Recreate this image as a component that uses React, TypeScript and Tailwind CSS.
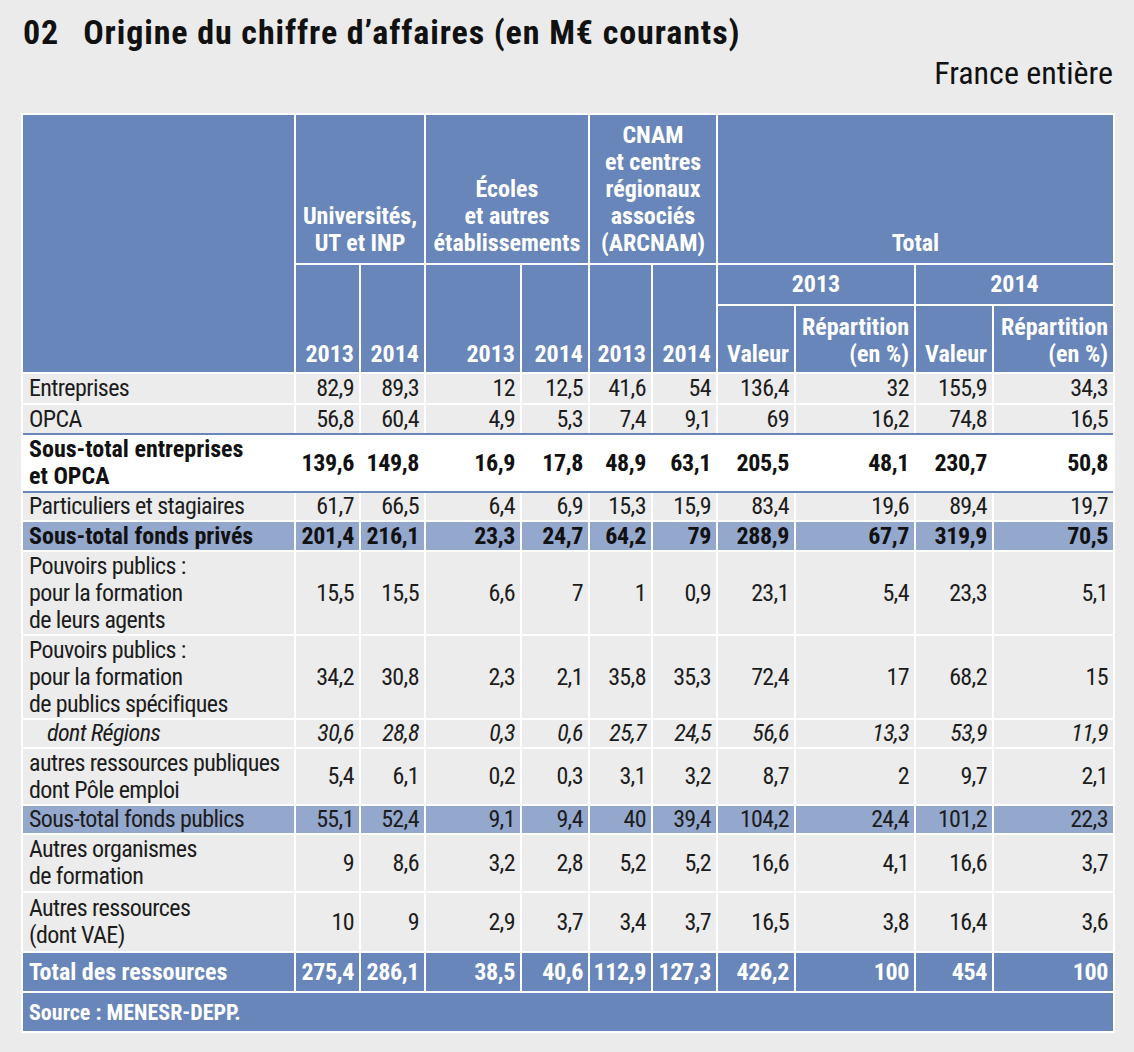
type Kind = "normal" | "italic" | "white" | "sub" | "subBold" | "total";

type Row = {
    label: string[];
    values: string[];
    kind: Kind;
    h: string;
};

const rows: Row[] = [
    { label: ["Entreprises"], values: ["82,9", "89,3", "12", "12,5", "41,6", "54", "136,4", "32", "155,9", "34,3"], kind: "normal", h: "h-[29px]" },
    { label: ["OPCA"], values: ["56,8", "60,4", "4,9", "5,3", "7,4", "9,1", "69", "16,2", "74,8", "16,5"], kind: "normal", h: "h-[28px]" },
    { label: ["Sous-total entreprises", "et OPCA"], values: ["139,6", "149,8", "16,9", "17,8", "48,9", "63,1", "205,5", "48,1", "230,7", "50,8"], kind: "white", h: "h-[52px]" },
    { label: ["Particuliers et stagiaires"], values: ["61,7", "66,5", "6,4", "6,9", "15,3", "15,9", "83,4", "19,6", "89,4", "19,7"], kind: "normal", h: "h-[27px]" },
    { label: ["Sous-total fonds privés"], values: ["201,4", "216,1", "23,3", "24,7", "64,2", "79", "288,9", "67,7", "319,9", "70,5"], kind: "subBold", h: "h-[28px]" },
    { label: ["Pouvoirs publics :", "pour la formation", "de leurs agents"], values: ["15,5", "15,5", "6,6", "7", "1", "0,9", "23,1", "5,4", "23,3", "5,1"], kind: "normal", h: "h-[82px]" },
    { label: ["Pouvoirs publics :", "pour la formation", "de publics spécifiques"], values: ["34,2", "30,8", "2,3", "2,1", "35,8", "35,3", "72,4", "17", "68,2", "15"], kind: "normal", h: "h-[82px]" },
    { label: ["dont Régions"], values: ["30,6", "28,8", "0,3", "0,6", "25,7", "24,5", "56,6", "13,3", "53,9", "11,9"], kind: "italic", h: "h-[27px]" },
    { label: ["autres ressources publiques", "dont Pôle emploi"], values: ["5,4", "6,1", "0,2", "0,3", "3,1", "3,2", "8,7", "2", "9,7", "2,1"], kind: "normal", h: "h-[55px]" },
    { label: ["Sous-total fonds publics"], values: ["55,1", "52,4", "9,1", "9,4", "40", "39,4", "104,2", "24,4", "101,2", "22,3"], kind: "sub", h: "h-[27px]" },
    { label: ["Autres organismes", "de formation"], values: ["9", "8,6", "3,2", "2,8", "5,2", "5,2", "16,6", "4,1", "16,6", "3,7"], kind: "normal", h: "h-[56px]" },
    { label: ["Autres ressources", "(dont VAE)"], values: ["10", "9", "2,9", "3,7", "3,4", "3,7", "16,5", "3,8", "16,4", "3,6"], kind: "normal", h: "h-[58px]" },
    { label: ["Total des ressources"], values: ["275,4", "286,1", "38,5", "40,6", "112,9", "127,3", "426,2", "100", "454", "100"], kind: "total", h: "h-[38px]" },
];

const kindClass: Record<Kind, string> = {
    normal: "bg-[#ececec] text-[#1c1c1c] tracking-[-0.6px]",
    italic: "bg-[#ececec] text-[#1c1c1c] italic tracking-[-0.6px]",
    white: "bg-white text-[#111] font-bold",
    sub: "bg-[#94a8cd] text-[#1c1c1c] tracking-[-0.6px]",
    subBold: "bg-[#94a8cd] text-[#111] font-bold",
    total: "bg-[#6886b9] text-white font-bold",
};

const headBlue = "bg-[#6886b9] text-white font-bold";

const BodyRow = ({ row }: { row: Row }) => {
    const cls = kindClass[row.kind];
    const bold = row.kind === "white" || row.kind === "subBold" || row.kind === "total";
    return (
        <>
            <div className={`${cls} ${row.h} flex flex-col justify-center whitespace-nowrap ${row.kind === "italic" ? "pl-[24px]" : "pl-[6px]"}`}>
                {row.label.map((l) => (
                    <span key={l}>{l}</span>
                ))}
            </div>
            {row.values.map((v, i) => (
                <div key={i} className={`${cls} ${row.h} flex items-center justify-end pr-[5px] ${bold ? "tracking-[-0.4px]" : ""}`}>
                    {v}
                </div>
            ))}
        </>
    );
};

export default function App() {
    return (
        <div className="min-h-[1052px] w-[1134px] bg-[#ebebeb] font-['Roboto','Liberation_Sans',sans-serif] [font-stretch:75%] text-[#111]">
            <div className="ml-[21px] w-[1094px] pt-[12px]">
                {/* Title */}
                <div className="flex h-[40px] items-center gap-[24px] pl-[2px] text-[34px] font-bold leading-[40px] tracking-[0.9px]">
                    <span>02</span>
                    <span>Origine du chiffre d’affaires (en M€ courants)</span>
                </div>
                <div className="mt-[2px] h-[38px] pr-[2px] text-right text-[32px] leading-[38px]">
                    France entière
                </div>

                {/* Table */}
                <div className="mt-[21px] grid grid-cols-[271px_63px_63px_94px_66px_61px_63px_76px_118px_76px_119px] gap-[2px] bg-white p-[2px] text-[24px] leading-[27px]">
                    {/* header row 1 */}
                    <div className={`${headBlue} row-span-3`} />
                    <div className={`${headBlue} col-span-2 flex h-[148px] flex-col items-center justify-end pb-[6px] text-center`}>
                        <span>Universités,</span>
                        <span>UT et INP</span>
                    </div>
                    <div className={`${headBlue} col-span-2 flex h-[148px] flex-col items-center justify-end pb-[6px] text-center`}>
                        <span>Écoles</span>
                        <span>et autres</span>
                        <span>établissements</span>
                    </div>
                    <div className={`${headBlue} col-span-2 flex h-[148px] flex-col items-center justify-end pb-[6px] text-center`}>
                        <span>CNAM</span>
                        <span>et centres</span>
                        <span>régionaux</span>
                        <span>associés</span>
                        <span>(ARCNAM)</span>
                    </div>
                    <div className={`${headBlue} col-span-4 flex h-[148px] flex-col items-center justify-end pb-[6px]`}>
                        <span>Total</span>
                    </div>

                    {/* header row 2 */}
                    {["2013", "2014", "2013", "2014", "2013", "2014"].map((y, i) => (
                        <div key={i} className={`${headBlue} row-span-2 flex items-end justify-end pb-[4px] pr-[5px]`}>
                            {y}
                        </div>
                    ))}
                    <div className={`${headBlue} col-span-2 flex h-[39px] items-center justify-center`}>2013</div>
                    <div className={`${headBlue} col-span-2 flex h-[39px] items-center justify-center`}>2014</div>

                    {/* header row 3 */}
                    {[0, 1].map((k) => (
                        <div key={k} className="contents">
                            <div className={`${headBlue} flex h-[66px] items-end justify-end pb-[4px] pr-[5px]`}>Valeur</div>
                            <div className={`${headBlue} flex h-[66px] flex-col items-end justify-end pb-[4px] pr-[5px] text-right`}>
                                <span>Répartition</span>
                                <span>(en %)</span>
                            </div>
                        </div>
                    ))}

                    {/* body */}
                    {rows.map((row, idx) => (
                        <div key={idx} className="contents">
                            {row.kind === "white" && (
                                <div className="col-span-full -mt-[2px] h-[2px] bg-[#6886b9]" />
                            )}
                            <BodyRow row={row} />
                            {row.kind === "white" && (
                                <div className="col-span-full -mb-[2px] h-[2px] bg-[#6886b9]" />
                            )}
                        </div>
                    ))}

                    {/* source */}
                    <div className={`${headBlue} col-span-full flex h-[38px] items-center pl-[6px] text-[22px]`}>
                        Source : MENESR-DEPP.
                    </div>
                </div>
            </div>
        </div>
    );
}
